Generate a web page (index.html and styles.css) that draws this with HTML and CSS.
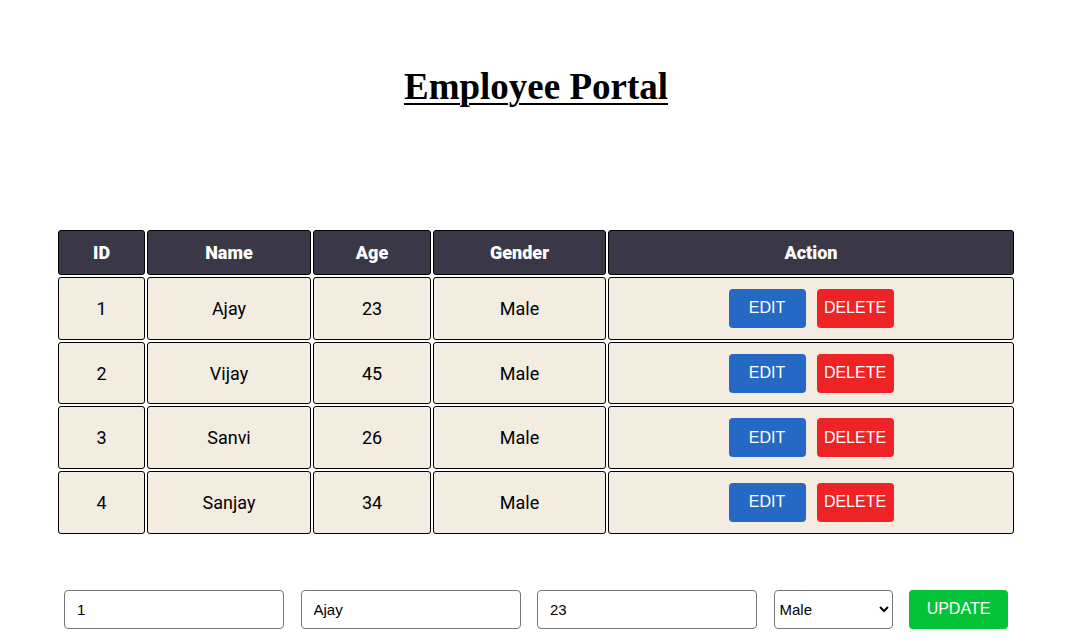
FILE: index.html
```html
<!DOCTYPE html>
<html lang="en">
<head>
<meta charset="utf-8">
<title>Employee Portal</title>
<link rel="stylesheet" href="styles.css">
</head>
<body>
<main class="page">
  <h1 class="title">Employee Portal</h1>
  <table class="emp-table">
    <colgroup>
      <col class="c-id"><col class="c-name"><col class="c-age"><col class="c-gender"><col class="c-action">
    </colgroup>
    <thead>
      <tr><th>ID</th><th>Name</th><th>Age</th><th>Gender</th><th>Action</th></tr>
    </thead>
    <tbody>
      <tr><td>1</td><td>Ajay</td><td>23</td><td>Male</td><td><div class="actions"><button class="btn btn-edit">EDIT</button><button class="btn btn-delete">DELETE</button></div></td></tr>
      <tr><td>2</td><td>Vijay</td><td>45</td><td>Male</td><td><div class="actions"><button class="btn btn-edit">EDIT</button><button class="btn btn-delete">DELETE</button></div></td></tr>
      <tr><td>3</td><td>Sanvi</td><td>26</td><td>Male</td><td><div class="actions"><button class="btn btn-edit">EDIT</button><button class="btn btn-delete">DELETE</button></div></td></tr>
      <tr><td>4</td><td>Sanjay</td><td>34</td><td>Male</td><td><div class="actions"><button class="btn btn-edit">EDIT</button><button class="btn btn-delete">DELETE</button></div></td></tr>
    </tbody>
  </table>
  <form class="edit-form">
    <input class="field" type="text" value="1">
    <input class="field" type="text" value="Ajay">
    <input class="field" type="text" value="23">
    <select class="select">
      <option>Male</option>
      <option>Female</option>
    </select>
    <button type="button" class="btn btn-update">UPDATE</button>
  </form>
</main>
</body>
</html>
```
FILE: styles.css
```css
html, body {
  margin: 0;
  padding: 0;
  background: #ffffff;
}

.page {
  width: 1072px;
  font-family: Roboto, "Liberation Sans", sans-serif;
  color: #000;
}

.title {
  margin: 66px 0 0;
  text-align: center;
  font-family: "Liberation Serif", serif;
  font-weight: bold;
  font-size: 37px;
  line-height: 41px;
  text-decoration: underline;
  text-decoration-thickness: 2px;
  text-underline-offset: 4px;
}

.emp-table {
  width: 960px;
  margin: 121px auto 0;
  border-collapse: separate;
  border-spacing: 2px;
  table-layout: fixed;
}

.c-id { width: 87px; }
.c-name { width: 164px; }
.c-age { width: 118px; }
.c-gender { width: 173px; }
.c-action { width: 406px; }

.emp-table th,
.emp-table td {
  border: 1px solid #000;
  border-radius: 3px;
  text-align: center;
  vertical-align: middle;
  font-size: 18px;
}

.emp-table th {
  background: #3a3846;
  color: #fff;
  font-weight: 900;
  line-height: 21px;
  padding: 11px 0;
}

.emp-table td {
  background: #f3ece0;
  font-weight: 400;
  line-height: 21px;
  padding: 10.85px 0;
}

.actions {
  display: flex;
  justify-content: center;
  gap: 11px;
}

.btn {
  height: 39px;
  border: none;
  border-radius: 4px;
  color: #fff;
  font-family: "Liberation Sans", Arial, sans-serif;
  font-size: 16px;
  padding: 0;
  cursor: pointer;
}

.btn-edit,
.btn-delete {
  width: 77px;
}

.btn-edit { background: #2569c5; }
.btn-delete { background: #ee2326; }

.edit-form {
  display: flex;
  justify-content: center;
  gap: 16.5px;
  margin-top: 54px;
}

.field {
  box-sizing: border-box;
  width: 220px;
  height: 39px;
  border: 1px solid #767676;
  border-radius: 4px;
  padding: 0 12px;
  font-family: "Liberation Sans", Arial, sans-serif;
  font-size: 15px;
  color: #000;
  background: #fff;
}

.select {
  box-sizing: border-box;
  width: 119px;
  height: 39px;
  border: 1px solid #767676;
  border-radius: 4px;
  padding: 0 1px;
  font-family: "Liberation Sans", Arial, sans-serif;
  font-size: 15px;
  color: #000;
  background: #fff;
}

.btn-update {
  width: 99px;
  background: #04c339;
}
```
